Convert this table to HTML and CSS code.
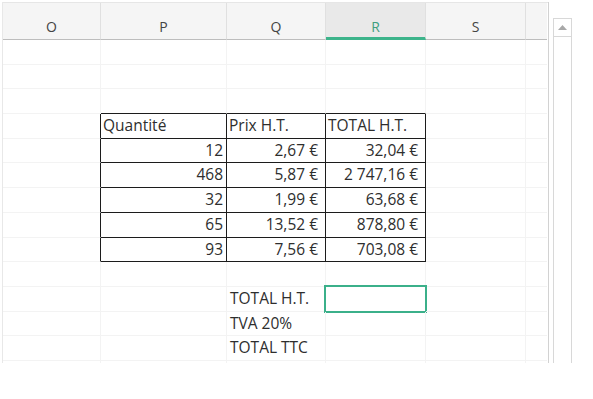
FILE: index.html
```html
<!DOCTYPE html>
<html lang="fr">
<head>
<meta charset="utf-8">
<title>Feuille</title>
<link rel="stylesheet" href="styles.css">
</head>
<body>
<div class="sheet">
  <div class="grid">
    <div class="row head">
      <div class="hc">O</div><div class="hc">P</div><div class="hc">Q</div><div class="hc sel">R</div><div class="hc">S</div><div class="hc"></div>
    </div>
    <div class="body">
      <div class="row"><div class="c"></div><div class="c"></div><div class="c"></div><div class="c"></div><div class="c"></div><div class="c"></div></div>
      <div class="row"><div class="c"></div><div class="c"></div><div class="c"></div><div class="c"></div><div class="c"></div><div class="c"></div></div>
      <div class="row"><div class="c"></div><div class="c top"></div><div class="c top"></div><div class="c top"></div><div class="c"></div><div class="c"></div></div>
      <div class="row"><div class="c lft"></div><div class="c t txt">Quantité</div><div class="c t txt">Prix H.T.</div><div class="c t txt">TOTAL H.T.</div><div class="c"></div><div class="c"></div></div>
      <div class="row"><div class="c lft"></div><div class="c t num">12</div><div class="c t eur">2,67 €</div><div class="c t eur">32,04 €</div><div class="c"></div><div class="c"></div></div>
      <div class="row"><div class="c lft"></div><div class="c t num">468</div><div class="c t eur">5,87 €</div><div class="c t eur">2 747,16 €</div><div class="c"></div><div class="c"></div></div>
      <div class="row"><div class="c lft"></div><div class="c t num">32</div><div class="c t eur">1,99 €</div><div class="c t eur">63,68 €</div><div class="c"></div><div class="c"></div></div>
      <div class="row"><div class="c lft"></div><div class="c t num">65</div><div class="c t eur">13,52 €</div><div class="c t eur">878,80 €</div><div class="c"></div><div class="c"></div></div>
      <div class="row"><div class="c lft"></div><div class="c t num">93</div><div class="c t eur">7,56 €</div><div class="c t eur">703,08 €</div><div class="c"></div><div class="c"></div></div>
      <div class="row"><div class="c"></div><div class="c"></div><div class="c"></div><div class="c"></div><div class="c"></div><div class="c"></div></div>
      <div class="row"><div class="c"></div><div class="c"></div><div class="c txt lbl">TOTAL H.T.</div><div class="c active"></div><div class="c"></div><div class="c"></div></div>
      <div class="row"><div class="c"></div><div class="c"></div><div class="c txt lbl">TVA 20%</div><div class="c"></div><div class="c"></div><div class="c"></div></div>
      <div class="row"><div class="c"></div><div class="c"></div><div class="c txt lbl">TOTAL TTC</div><div class="c"></div><div class="c"></div><div class="c"></div></div>
      <div class="row"><div class="c"></div><div class="c"></div><div class="c"></div><div class="c"></div><div class="c"></div><div class="c"></div></div>
    </div>
  </div>
  <div class="scroll">
    <div class="up"><svg width="9" height="5" viewBox="0 0 9 5"><path d="M0 5 L4.5 0 L9 5 Z" fill="#a8a8a8"/></svg></div>
  </div>
</div>
</body>
</html>
```
FILE: styles.css
```css
html, body {
  margin: 0;
  padding: 0;
  background: #ffffff;
}
body {
  font-family: "Open Sans", "Noto Sans", sans-serif;
  color: #2e2e2e;
}
.sheet {
  display: flex;
  align-items: flex-start;
  padding: 2px 0 0 2px;
}
.grid {
  width: 545px;
  border-left: 1px solid #e8e8e8;
  border-right: 1px solid #d2d2d2;
}
.row {
  display: grid;
  grid-template-columns: 98px 126px 99px 100px 100px 21px;
  height: 24.7px;
}
.head {
  height: 37px;
  border-top: 1px solid #e6e6e6;
}
.hc {
  background: #f5f5f5;
  border-right: 1px solid #e0e0e0;
  border-bottom: 1px solid #bdbdbd;
  font-size: 14px;
  line-height: 16px;
  color: #444444;
  display: flex;
  align-items: flex-end;
  justify-content: center;
  padding-bottom: 4px;
}
.hc:last-child {
  border-right: none;
}
.hc.sel {
  background: #e9e9e9;
  color: #3f9f80;
  border-bottom: 3px solid #3db48b;
  padding-bottom: 2px;
}
.body {
  height: 323px;
  overflow: hidden;
}
.c {
  border-right: 1px solid #f3f3f3;
  border-bottom: 1px solid #f3f3f3;
  font-size: 15.5px;
  line-height: 22px;
  white-space: nowrap;
  position: relative;
}
.c:last-child {
  border-right: none;
}
.top {
  border-bottom-color: #1c1c1c;
}
.lft {
  border-right-color: #1c1c1c;
}
.t {
  border-right-color: #1c1c1c;
  border-bottom-color: #1c1c1c;
}
.txt {
  padding-left: 2px;
}
.lbl {
  padding-left: 3px;
}
.num {
  text-align: right;
  padding-right: 3px;
}
.eur {
  text-align: right;
  padding-right: 7px;
}
.active::after {
  content: "";
  position: absolute;
  top: -2px;
  left: -2px;
  right: -2px;
  bottom: -2px;
  border: 2px solid #3bb08a;
}
.scroll {
  margin-top: 16px;
  margin-left: 4px;
  width: 17px;
  height: 345px;
  border-left: 1px solid #d8d8d8;
  border-right: 1px solid #d8d8d8;
}
.up {
  height: 17px;
  border-top: 1px solid #d8d8d8;
  border-bottom: 1px solid #d8d8d8;
  display: flex;
  align-items: center;
  justify-content: center;
}
```
